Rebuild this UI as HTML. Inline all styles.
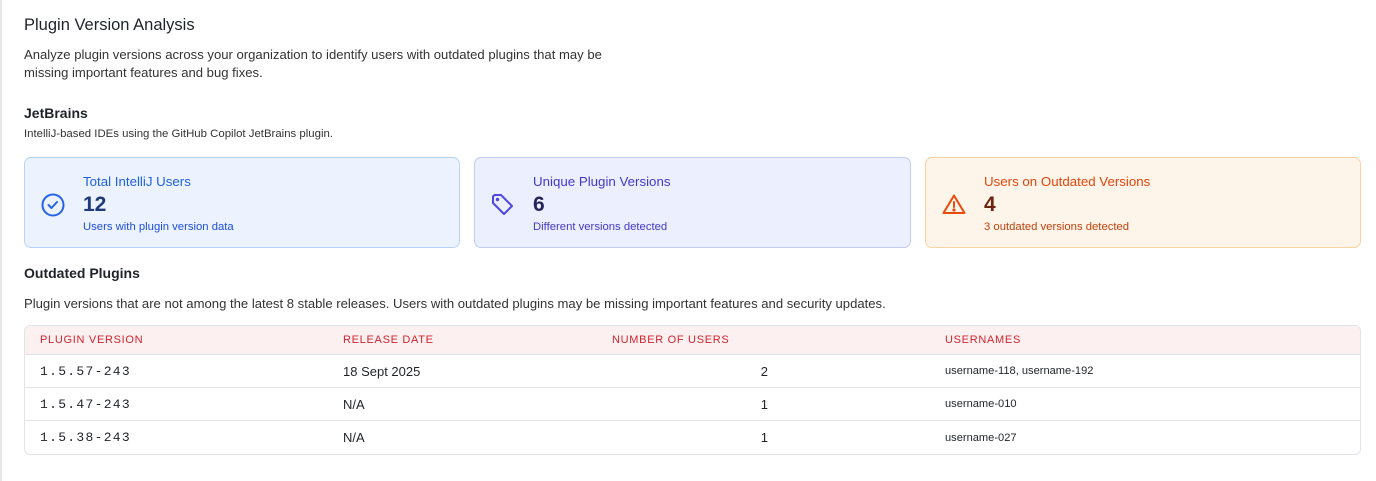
<!DOCTYPE html>
<html><head><style>
*{box-sizing:border-box;margin:0;padding:0}
body{width:1376px;height:481px;background:#fff;font-family:"Liberation Sans",sans-serif;color:#1f2328;position:relative;overflow:hidden}
.lb{position:absolute;left:0;top:0;width:2px;height:481px;background:#e5e7eb}
.a{position:absolute;white-space:nowrap}
.card{position:absolute;top:157px;height:91px;border-radius:7px;border:1px solid}
.card svg{position:absolute;left:15px;top:34px}
.ct{position:absolute;left:58px;top:16px;font-size:13.3px}
.cn{position:absolute;left:58px;top:35px;font-size:21px;font-weight:bold}
.cs{position:absolute;left:58px;top:63px;font-size:11.3px}
table{position:absolute;left:24px;top:325px;width:1337px;border-collapse:separate;border-spacing:0;border:1px solid #e1e4e8;border-radius:6px;overflow:hidden;font-size:13px}
th{background:#fcf0f0;color:#d1242f;font-size:11px;font-weight:normal;letter-spacing:.7px;text-align:left;height:29px;padding-left:15px;border-bottom:1px solid #e1e4e8}
td{height:33px;padding-left:15px;border-bottom:1px solid #e1e4e8}
tr:last-child td{border-bottom:none}
.m{font-family:"Liberation Mono",monospace;letter-spacing:1.3px}
.u{font-size:11.1px}
</style></head><body>
<div class="lb"></div>
<div class="a" style="left:24px;top:16px;font-size:16.5px;font-weight:500">Plugin Version Analysis</div>
<div class="a" style="left:24px;top:46px;font-size:13.1px;line-height:18px;color:#333">Analyze plugin versions across your organization to identify users with outdated plugins that may be<br>missing important features and bug fixes.</div>
<div class="a" style="left:24px;top:105px;font-size:14px;font-weight:bold">JetBrains</div>
<div class="a" style="left:24px;top:128px;font-size:11.4px;color:#333">IntelliJ-based IDEs using the GitHub Copilot JetBrains plugin.</div>

<div class="card" style="left:24px;width:436px;background:#ecf3fe;border-color:#b6d3fb">
<svg width="26" height="26" viewBox="0 0 26 26" fill="none" stroke="#2563eb" stroke-width="2"><circle cx="13" cy="13" r="10.5"/><path d="M8.5 13l3 3 5.5-6" stroke-linecap="round" stroke-linejoin="round"/></svg>
<div class="ct" style="color:#1d5fe0">Total IntelliJ Users</div>
<div class="cn" style="color:#1e3a7a">12</div>
<div class="cs" style="color:#1d4ed8">Users with plugin version data</div></div>

<div class="card" style="left:474px;width:437px;background:#eceffd;border-color:#c3cbf7">
<svg width="26" height="26" viewBox="0 0 26 26" fill="none" stroke="#4f46e5" stroke-width="2" stroke-linejoin="round"><path d="M3 4.5v6.5l11 11 8-8-11-11H4.5z"/><circle cx="7.5" cy="7.5" r=".7" fill="#4f46e5"/></svg>
<div class="ct" style="color:#4338ca">Unique Plugin Versions</div>
<div class="cn" style="color:#25245a">6</div>
<div class="cs" style="color:#4338ca">Different versions detected</div></div>

<div class="card" style="left:925px;width:436px;background:#fef5ea;border-color:#fbd3a1">
<svg width="26" height="26" viewBox="0 0 26 26" fill="none" stroke="#ea4a0c" stroke-width="2" stroke-linejoin="round" stroke-linecap="round"><path d="M13 3.5L2.5 21h21z"/><path d="M13 10v5"/><circle cx="13" cy="18" r=".6" fill="#ea4a0c"/></svg>
<div class="ct" style="color:#e5440a">Users on Outdated Versions</div>
<div class="cn" style="color:#6b2510">4</div>
<div class="cs" style="color:#c2410c">3 outdated versions detected</div></div>

<div class="a" style="left:24px;top:265px;font-size:14px;font-weight:bold">Outdated Plugins</div>
<div class="a" style="left:24px;top:296px;font-size:13.1px;color:#333">Plugin versions that are not among the latest 8 stable releases. Users with outdated plugins may be missing important features and security updates.</div>

<table>
<tr><th style="width:303px">PLUGIN VERSION</th><th style="width:269px">RELEASE DATE</th><th style="width:333px">NUMBER OF USERS</th><th>USERNAMES</th></tr>
<tr><td class="m">1.5.57-243</td><td>18 Sept 2025</td><td style="text-align:right;padding-right:162px">2</td><td class="u">username-118, username-192</td></tr>
<tr><td class="m">1.5.47-243</td><td>N/A</td><td style="text-align:right;padding-right:162px">1</td><td class="u">username-010</td></tr>
<tr><td class="m">1.5.38-243</td><td>N/A</td><td style="text-align:right;padding-right:162px">1</td><td class="u">username-027</td></tr>
</table>
</body></html>
